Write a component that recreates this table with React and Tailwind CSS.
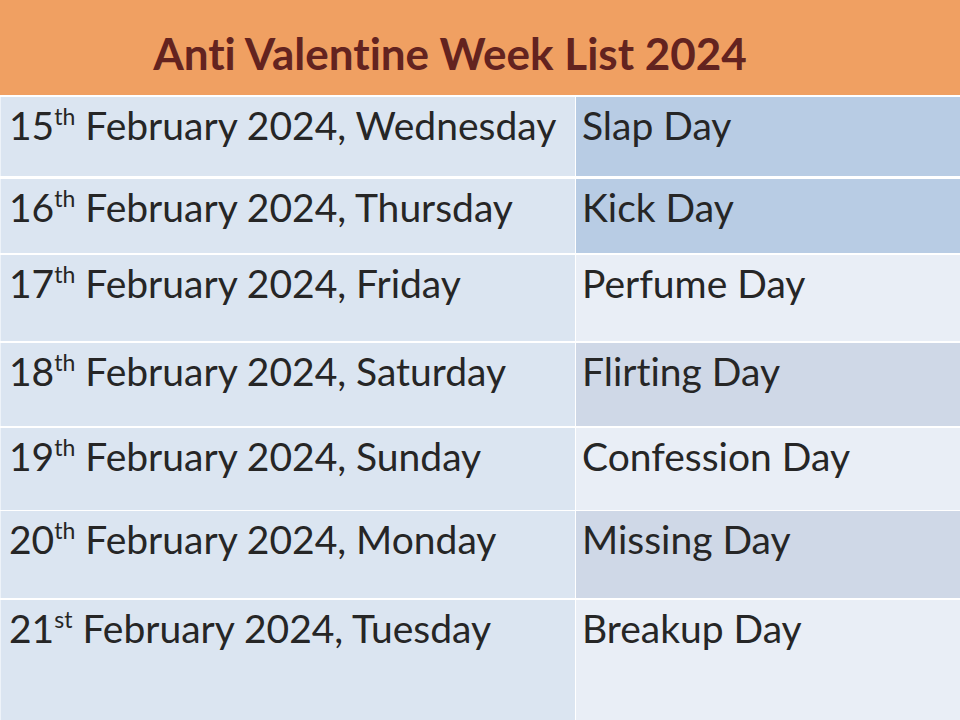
import React from "react";

const rows = [
  { n: "15", s: "th", rest: " February 2024, Wednesday", day: "Slap Day", h: "h-[79px]", sep: "mt-[3px]", bg: "bg-[#b8cce4]" },
  { n: "16", s: "th", rest: " February 2024, Thursday", day: "Kick Day", h: "h-[74px]", sep: "mt-[3px]", bg: "bg-[#b8cce4]" },
  { n: "17", s: "th", rest: " February 2024, Friday", day: "Perfume Day", h: "h-[86px]", sep: "mt-[2px]", bg: "bg-[#e9eef6]" },
  { n: "18", s: "th", rest: " February 2024, Saturday", day: "Flirting Day", h: "h-[83px]", sep: "mt-[2px]", bg: "bg-[#cfd8e7]" },
  { n: "19", s: "th", rest: " February 2024, Sunday", day: "Confession Day", h: "h-[82px]", sep: "mt-[2px]", bg: "bg-[#e9eef6]" },
  { n: "20", s: "th", rest: " February 2024, Monday", day: "Missing Day", h: "h-[87px]", sep: "mt-[1px]", bg: "bg-[#cfd8e7]" },
  { n: "21", s: "st", rest: " February 2024, Tuesday", day: "Breakup Day", h: "h-[120px]", sep: "mt-[2px]", bg: "bg-[#e9eef6]" },
];

export default function App() {
  return (
    <div className="w-[960px] h-[720px] overflow-hidden bg-white flex flex-col font-['Lato',sans-serif] text-[#262626] [font-variant-ligatures:none]">
      <div className="h-[95px] shrink-0 bg-[#f0a062] flex items-center justify-center pr-[60px]">
        <h1 className="text-[44px] leading-none font-bold text-[#63231f] pt-[10px]">
          Anti Valentine Week List 2024
        </h1>
      </div>
      <div className="flex flex-col mt-[2px]">
        {rows.map((r, i) => (
          <div key={i} className={`flex shrink-0 ${r.h} ${i === 0 ? "" : r.sep}`}>
            <div className="w-[575px] shrink-0 bg-[#dbe5f1] border-l border-[#eef3f9] pl-[8px] pt-[4px] text-[39px] leading-[48px] whitespace-nowrap">
              {r.n}
              <sup className="text-[23px] top-[-15px]">{r.s}</sup>
              {r.rest}
            </div>
            <div className={`flex-1 ml-[1px] ${r.bg} pl-[6px] pt-[4px] text-[39px] leading-[48px] whitespace-nowrap`}>
              {r.day}
            </div>
          </div>
        ))}
      </div>
    </div>
  );
}
